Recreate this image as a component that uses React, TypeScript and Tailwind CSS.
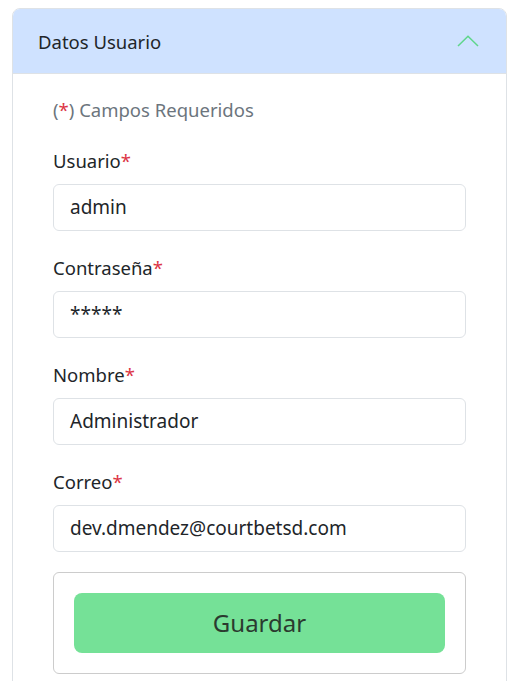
export default function App() {
  const fields = [
    { label: "Usuario", value: "admin" },
    { label: "Contraseña", value: "*****" },
    { label: "Nombre", value: "Administrador" },
    { label: "Correo", value: "dev.dmendez@courtbetsd.com" },
  ];

  return (
    <div className="min-h-screen bg-white pl-3 pr-2 pt-2 font-['Noto_Sans',sans-serif] text-[#212529]">
      <div className="rounded-t-lg border border-[#dee2e6] overflow-hidden">
        <div className="h-[65px] bg-[#cfe2ff] flex items-center justify-between pl-[25px] pr-[27px] border-b border-[#dee2e6]">
          <span className="text-[18.5px] mt-[2px]">Datos Usuario</span>
          <svg width="22" height="12" viewBox="0 0 22 12" fill="none">
            <path d="M1 11 L11 1.2 L21 11" stroke="#5fd68b" strokeWidth="1.5" />
          </svg>
        </div>
        <div className="px-10 pt-[22px] pb-6">
          <p className="text-[18.5px] text-[#6c757d]">
            (<span className="text-[#dc3545]">*</span>) Campos Requeridos
          </p>
          <div className="flex flex-col gap-[23px] mt-[23px]">
            {fields.map((f) => (
              <div key={f.label}>
                <label className="block text-[18.5px] leading-[27px] mb-[10px]">
                  {f.label}
                  <span className="text-[#dc3545]">*</span>
                </label>
                <div className="h-[47px] border border-[#dee2e6] rounded-md px-4 flex items-center text-[19px]">
                  {f.value}
                </div>
              </div>
            ))}
          </div>
          <div className="mt-5 border border-[#ccc] rounded-md px-5 py-5">
            <button className="w-full h-[60px] rounded-lg bg-[#75e197] text-[24px] text-[#2b3a2f]">
              Guardar
            </button>
          </div>
        </div>
      </div>
    </div>
  );
}
